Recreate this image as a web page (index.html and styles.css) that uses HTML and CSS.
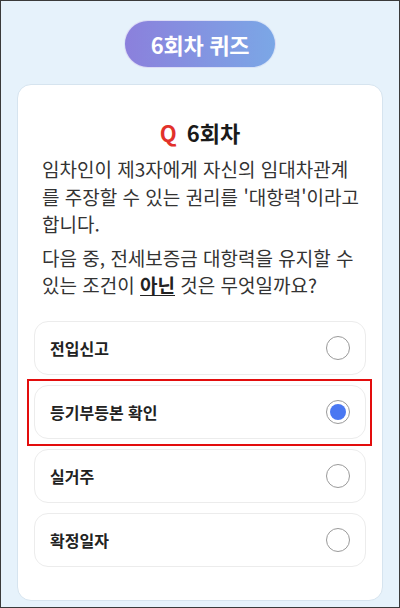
FILE: index.html
```html
<!DOCTYPE html>
<html lang="ko">
<head>
<meta charset="utf-8">
<title>6회차 퀴즈</title>
<link rel="stylesheet" href="styles.css">
</head>
<body>
<div class="screen">
  <div class="pill-wrap"><div class="pill">6회차 퀴즈</div></div>
  <div class="card">
    <h1 class="q-title"><span class="q-mark">Q</span>6회차</h1>
    <p class="q-text">임차인이 제3자에게 자신의 임대차관계를 주장할 수 있는 권리를 '대항력'이라고 합니다.</p>
    <p class="q-text">다음 중, 전세보증금 대항력을 유지할 수 있는 조건이 <b class="em">아닌</b> 것은 무엇일까요?</p>
    <div class="options">
      <div class="option"><span class="label">전입신고</span><span class="radio"></span></div>
      <div class="option picked"><span class="label">등기부등본 확인</span><span class="radio on"></span></div>
      <div class="option"><span class="label">실거주</span><span class="radio"></span></div>
      <div class="option"><span class="label">확정일자</span><span class="radio"></span></div>
    </div>
  </div>
</div>
</body>
</html>
```

FILE: styles.css
```css
* { box-sizing: border-box; }
html, body { margin: 0; padding: 0; }
body {
  font-family: "Noto Sans CJK KR", "Noto Sans", sans-serif;
  background: #e6f2fb;
}
.screen {
  width: 400px;
  height: 608px;
  border: 1px solid #3a3a3a;
  background: #e6f2fb;
  display: flex;
  flex-direction: column;
  overflow: hidden;
}
.pill-wrap {
  display: flex;
  justify-content: center;
  padding-top: 19px;
}
.pill {
  width: 152px;
  height: 48px;
  border-radius: 24px;
  background: linear-gradient(90deg, #8b80dc 0%, #7ba7e6 100%);
  border: 1.5px solid rgba(255,255,255,0.7);
  color: #fff;
  font-weight: 700;
  font-size: 22px;
  display: flex;
  align-items: center;
  justify-content: center;
  letter-spacing: -0.3px;
}
.card {
  margin: 16px 16px 0;
  background: #fff;
  border: 1px solid #d6e4ef;
  border-radius: 14px;
  padding: 32px 16px 33px;
}
.q-title {
  margin: 0;
  font-size: 22px;
  line-height: 30px;
  font-weight: 700;
  color: #1a1a1a;
  text-align: center;
}
.q-mark {
  color: #e2312b;
  margin-right: 10px;
}
.q-text {
  margin: 8px 0 0;
  padding: 0 6px 0 8px;
  font-size: 19px;
  line-height: 27.5px;
  color: #333;
  word-break: break-all;
}
.q-text + .q-text { margin-top: 6px; }
.em {
  font-weight: 700;
  color: #222;
  text-decoration: underline;
  text-underline-offset: 2px;
}
.options {
  margin-top: 22px;
  display: flex;
  flex-direction: column;
  gap: 10px;
}
.option {
  position: relative;
  height: 54px;
  border: 1px solid #ececec;
  border-radius: 14px;
  background: #fff;
  display: flex;
  align-items: center;
  justify-content: space-between;
  padding: 0 15px;
}
.label {
  font-size: 16px;
  font-weight: 700;
  color: #222;
}
.radio {
  width: 24px;
  height: 24px;
  border-radius: 50%;
  border: 1.5px solid #9a9a9a;
  background: #fff;
  display: flex;
  align-items: center;
  justify-content: center;
}
.radio.on::before {
  content: "";
  width: 16px;
  height: 16px;
  border-radius: 50%;
  background: #4a78f2;
}
.option.picked::after {
  content: "";
  position: absolute;
  left: -8px;
  right: -7px;
  top: -7px;
  bottom: -8px;
  border: 2.5px solid #e30d0d;
  pointer-events: none;
}
```
